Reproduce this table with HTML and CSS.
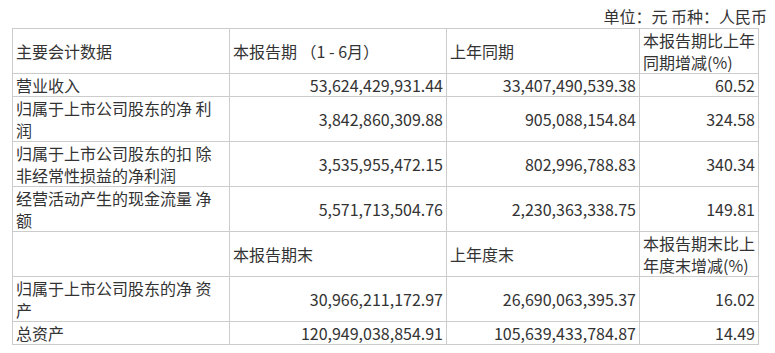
FILE: index.html
```html
<!DOCTYPE html>
<html lang="zh-CN">
<head>
    <meta charset="UTF-8">
    <title>主要会计数据</title>
    <link rel="stylesheet" href="styles.css">
</head>
<body>
    <div class="report">
        <div class="unit">单位：元&nbsp;币种：人民币</div>
        <table class="data-table">
            <colgroup>
                <col class="col-name">
                <col class="col-cur">
                <col class="col-prev">
                <col class="col-chg">
            </colgroup>
            <tr class="row-2">
                <td>主要会计数据</td>
                <td>本报告期 （1 - 6月）</td>
                <td>上年同期</td>
                <td>本报告期比上年<br>同期增减(%)</td>
            </tr>
            <tr>
                <td>营业收入</td>
                <td class="num">53,624,429,931.44</td>
                <td class="num">33,407,490,539.38</td>
                <td class="num">60.52</td>
            </tr>
            <tr class="row-2">
                <td>归属于上市公司股东的净 利<br>润</td>
                <td class="num">3,842,860,309.88</td>
                <td class="num">905,088,154.84</td>
                <td class="num">324.58</td>
            </tr>
            <tr class="row-2">
                <td>归属于上市公司股东的扣 除<br>非经常性损益的净利润</td>
                <td class="num">3,535,955,472.15</td>
                <td class="num">802,996,788.83</td>
                <td class="num">340.34</td>
            </tr>
            <tr class="row-2">
                <td>经营活动产生的现金流量 净<br>额</td>
                <td class="num">5,571,713,504.76</td>
                <td class="num">2,230,363,338.75</td>
                <td class="num">149.81</td>
            </tr>
            <tr class="row-2">
                <td></td>
                <td>本报告期末</td>
                <td>上年度末</td>
                <td>本报告期末比上<br>年度末增减(%)</td>
            </tr>
            <tr class="row-2">
                <td>归属于上市公司股东的净 资<br>产</td>
                <td class="num">30,966,211,172.97</td>
                <td class="num">26,690,063,395.37</td>
                <td class="num">16.02</td>
            </tr>
            <tr>
                <td>总资产</td>
                <td class="num">120,949,038,854.91</td>
                <td class="num">105,639,433,784.87</td>
                <td class="num">14.49</td>
            </tr>
        </table>
    </div>
</body>
</html>
```

FILE: styles.css
```css
body {
    margin: 0;
    background-color: #ffffff;
    color: #333333;
    font-family: "Noto Sans CJK SC", "Noto Sans", sans-serif;
    font-size: 16px;
}
.report {
    padding: 5px 8px 0 12px;
}
.unit {
    text-align: right;
    line-height: 22px;
    height: 23px;
}
.data-table {
    border-collapse: collapse;
    table-layout: fixed;
    width: 746px;
}
.col-name {
    width: 217px;
}
.col-cur {
    width: 217px;
}
.col-prev {
    width: 193px;
}
.col-chg {
    width: 119px;
}
.data-table td {
    border: 1px solid #cccccc;
    padding: 0 3px;
    line-height: 22px;
    vertical-align: middle;
    text-align: left;
}
.data-table td.num {
    text-align: right;
}
```
